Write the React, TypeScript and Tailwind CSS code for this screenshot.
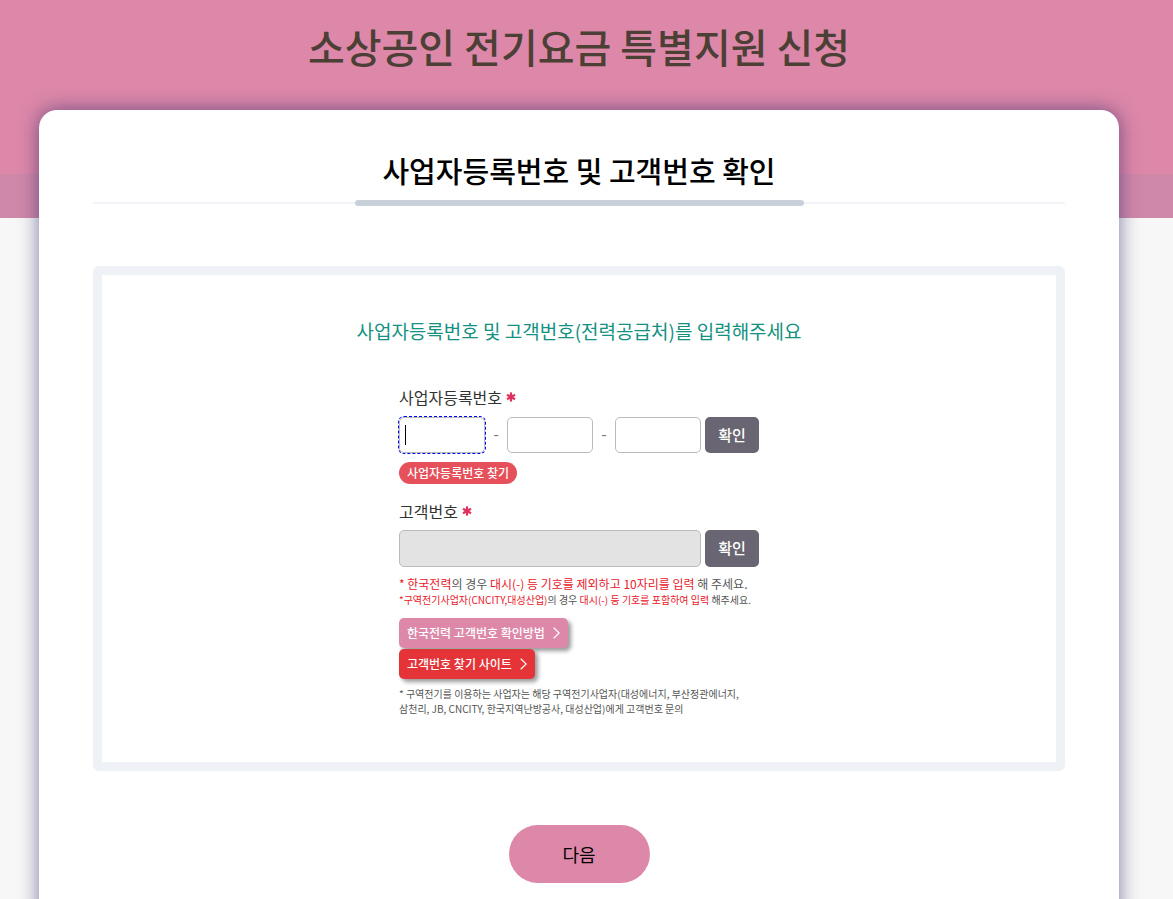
import React, { useState } from "react";

const KR_FONT = "font-['Noto_Sans_CJK_KR','Noto_Sans',sans-serif]";

const RequiredMark: React.FC = () => (
  <svg className="h-[10px] w-[10px]" viewBox="0 0 10 10" role="img" aria-label="필수">
    <g stroke="#e0305f" strokeWidth="2.2">
      <path d="M5 0.4v9.2" />
      <path d="M1 2.7l8 4.6" />
      <path d="M9 2.7l-8 4.6" />
    </g>
  </svg>
);

const Chevron: React.FC = () => (
  <svg className="h-3 w-[7px]" viewBox="0 0 7 12" fill="none" stroke="#fff" strokeWidth="1.2" aria-hidden="true">
    <path d="M0.7 0.7L6.2 6L0.7 11.3" />
  </svg>
);

const ConfirmButton: React.FC<{ onClick?: () => void }> = ({ onClick }) => (
  <button type="button" onClick={onClick} className="ml-1 w-[54px] shrink-0 rounded-[5px] bg-[#696572] text-[15px] font-medium text-white">
    확인
  </button>
);

const App: React.FC = () => {
  const [bizNo, setBizNo] = useState(["", "", ""]);
  const [focused, setFocused] = useState(0);

  const handleChange = (index: number, value: string) => {
    setBizNo((prev) => prev.map((part, i) => (i === index ? value : part)));
  };

  return (
    <div
      className={`${KR_FONT} flex min-h-screen flex-col bg-[linear-gradient(#dd88a9_174px,#d088a9_174px,#d088a9_218px,#f7f7f7_218px)] pr-[15px] text-[#333]`}
    >
      <header className="h-[110px] shrink-0 pt-4">
        <h1 className="text-center text-[40px] leading-[60px] font-medium text-[#4c4036]">소상공인 전기요금 특별지원 신청</h1>
      </header>

      <main className="mx-auto flex w-full max-w-[1080px] grow flex-col rounded-t-[18px] bg-white px-[54px] pt-10 pb-12 shadow-[0_0_20px_rgba(40,35,100,0.6)]">
        <h2 className="text-center text-[29px] leading-10 font-medium text-black">사업자등록번호 및 고객번호 확인</h2>
        <div className="mt-[10px] flex items-center">
          <div className="h-[2px] flex-1 bg-[#f0f3f8]" />
          <div className="h-[6px] w-[449px] rounded-full bg-[#c8d0d9]" />
          <div className="h-[2px] flex-1 bg-[#f0f3f8]" />
        </div>

        <section className="mt-[60px] rounded-md border-9 border-[#eef2f7] pt-10 pb-11">
          <h3 className="text-center text-[19px] leading-8 text-[#159182]">사업자등록번호 및 고객번호(전력공급처)를 입력해주세요</h3>

          <form className="mx-auto mt-[38px] w-[360px]">
            <label htmlFor="biz-0" className="flex items-center gap-1 text-base leading-6">
              사업자등록번호 <RequiredMark />
            </label>
            <div className="mt-2 flex h-9">
              {bizNo.map((part, i) => (
                <React.Fragment key={i}>
                  {i > 0 && <span className="w-[22px] text-center text-base leading-8 text-[#777]">-</span>}
                  <div className="relative flex">
                    <input
                      id={`biz-${i}`}
                      aria-label={`사업자등록번호 ${i + 1}`}
                      value={part}
                      onChange={(e) => handleChange(i, e.target.value)}
                      onFocus={() => setFocused(i)}
                      className={`w-[86px] rounded-[5px] border border-[#bbb] bg-white px-1.5 text-base ${
                        focused === i ? "outline-1 outline-dashed outline-[#0000ff]" : "outline-none"
                      }`}
                    />
                    {focused === i && part === "" && <span className="pointer-events-none absolute top-2 left-1.5 h-5 w-px bg-black" />}
                  </div>
                </React.Fragment>
              ))}
              <ConfirmButton />
            </div>
            <a href="#biz-search" className="mt-[9px] block w-fit rounded-full bg-[#e6505a] px-2 text-xs leading-[22px] font-medium text-white">
              사업자등록번호 찾기
            </a>

            <label htmlFor="customer-no" className="mt-[15px] flex items-center gap-1 text-base leading-6">
              고객번호 <RequiredMark />
            </label>
            <div className="mt-[7px] flex h-[37px]">
              <input id="customer-no" disabled className="w-full min-w-0 rounded-[5px] border border-[#bbb] bg-[#e3e3e3] px-1.5 text-base" />
              <ConfirmButton />
            </div>

            <div className="mt-[9px] whitespace-nowrap text-[#555]">
              <p className="text-xs leading-4">
                <span className="text-[#e8202a]">* 한국전력</span>의 경우 <span className="text-[#e8202a]">대시(-) 등 기호를 제외하고 10자리를 입력</span> 해 주세요.
              </p>
              <p className="text-[10px] leading-4">
                <span className="text-[#e8202a]">*구역전기사업자(CNCITY,대성산업)</span>의 경우 <span className="text-[#e8202a]">대시(-) 등 기호를 포함하여 입력</span> 해주세요.
              </p>
            </div>

            <a
              href="#kepco-guide"
              className="mt-[10px] flex h-[30px] w-[169px] items-center justify-between rounded-[5px] bg-[#dd88a9] px-2 text-xs font-medium text-white shadow-[3px_3px_4px_rgba(0,0,0,0.4)]"
            >
              한국전력 고객번호 확인방법 <Chevron />
            </a>
            <a
              href="#customer-search"
              className="mt-px flex h-[30px] w-[136px] items-center justify-between rounded-[5px] bg-[#e43438] px-2 text-xs font-medium text-white shadow-[3px_3px_4px_rgba(0,0,0,0.4)]"
            >
              고객번호 찾기 사이트 <Chevron />
            </a>

            <p className="mt-[7px] mb-[2px] text-[10px] leading-[15px] whitespace-nowrap text-[#555]">
              * 구역전기를 이용하는 사업자는 해당 구역전기사업자(대성에너지, 부산정관에너지,
              <br />
              삼천리, JB, CNCITY, 한국지역난방공사, 대성산업)에게 고객번호 문의
            </p>
          </form>
        </section>

        <button type="button" className="mx-auto mt-[54px] h-[58px] w-[141px] shrink-0 rounded-full bg-[#dd88a9] text-lg text-black">
          다음
        </button>
      </main>
    </div>
  );
};

export default App;
